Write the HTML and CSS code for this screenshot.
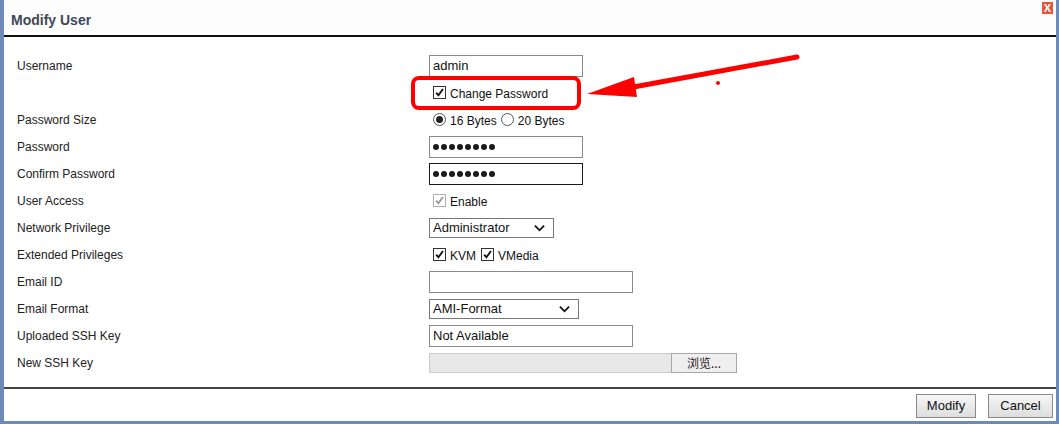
FILE: index.html
```html
<!DOCTYPE html>
<html>
<head>
<meta charset="utf-8">
<link rel="stylesheet" href="styles.css">
</head>
<body>
<div class="dialog">
  <div class="titlebar">
    <span class="title">Modify User</span>
    <span class="close">X</span>
  </div>
  <div class="form">
    <div class="label">Username</div>
    <div class="ctrl"><div class="input w154">admin</div></div>

    <div class="label"></div>
    <div class="ctrl"><span class="cb checked"><svg viewBox="0 0 12 12"><path d="M2.3 6.2 L4.8 9 L9.8 2.2"/></svg></span><span class="cbtext">Change Password</span></div>

    <div class="label">Password Size</div>
    <div class="ctrl"><span class="radio on"></span><span class="rtext">16 Bytes</span><span class="radio"></span><span class="rtext">20 Bytes</span></div>

    <div class="label">Password</div>
    <div class="ctrl"><div class="input w154 dots"><i></i><i></i><i></i><i></i><i></i><i></i><i></i><i></i></div></div>

    <div class="label">Confirm Password</div>
    <div class="ctrl"><div class="input w154 dots focus"><i></i><i></i><i></i><i></i><i></i><i></i><i></i><i></i></div></div>

    <div class="label">User Access</div>
    <div class="ctrl"><span class="cb checked disabled"><svg viewBox="0 0 12 12"><path d="M2.3 6.2 L4.8 9 L9.8 2.2"/></svg></span><span class="cbtext">Enable</span></div>

    <div class="label">Network Privilege</div>
    <div class="ctrl"><div class="select w125"><span>Administrator</span><svg viewBox="0 0 12 8"><path d="M1 1.5 L6 6.5 L11 1.5"/></svg></div></div>

    <div class="label">Extended Privileges</div>
    <div class="ctrl"><span class="cb checked"><svg viewBox="0 0 12 12"><path d="M2.3 6.2 L4.8 9 L9.8 2.2"/></svg></span><span class="cbtext kvm">KVM</span><span class="cb checked"><svg viewBox="0 0 12 12"><path d="M2.3 6.2 L4.8 9 L9.8 2.2"/></svg></span><span class="cbtext">VMedia</span></div>

    <div class="label">Email ID</div>
    <div class="ctrl"><div class="input w204"></div></div>

    <div class="label">Email Format</div>
    <div class="ctrl"><div class="select w150"><span>AMI-Format</span><svg viewBox="0 0 12 8"><path d="M1 1.5 L6 6.5 L11 1.5"/></svg></div></div>

    <div class="label">Uploaded SSH Key</div>
    <div class="ctrl"><div class="input w204">Not Available</div></div>

    <div class="label">New SSH Key</div>
    <div class="ctrl"><div class="file"><span class="filebar"></span><span class="filebtn">浏览...</span></div></div>
  </div>
  <div class="footer">
    <button class="btn modify">Modify</button>
    <button class="btn cancel">Cancel</button>
  </div>
</div>
<svg class="annot" width="1059" height="424" viewBox="0 0 1059 424">
  <rect x="413" y="78" width="166" height="30" rx="6" ry="6" fill="none" stroke="#ff0000" stroke-width="4"/>
  <line x1="628" y1="88" x2="797" y2="57" stroke="#ff0000" stroke-width="5" stroke-linecap="round"/>
  <polygon points="587,94 634,77 637,97" fill="#ff0000"/>
  <circle cx="718" cy="83" r="2" fill="#ff0000"/>
</svg>
</body>
</html>
```
FILE: styles.css
```css
html, body {
  margin: 0;
  padding: 0;
  background: #ffffff;
}
body {
  font-family: "Liberation Sans", Arial, sans-serif;
  width: 1059px;
  height: 424px;
  overflow: hidden;
  position: relative;
}
.dialog {
  box-sizing: border-box;
  width: 1059px;
  height: 424px;
  border-left: 4px solid #6f8ab7;
  border-right: 3px solid #6f8ab7;
  border-bottom: 3px solid #6f8ab7;
  background: #ffffff;
  display: flex;
  flex-direction: column;
}
.titlebar {
  height: 35px;
  flex: none;
  border-bottom: 2px solid #111111;
  background: #fdfdfd;
  display: flex;
  align-items: center;
  justify-content: space-between;
  position: relative;
}
.title {
  font-size: 14px;
  font-weight: bold;
  color: #404858;
  padding-left: 7px;
  margin-top: 5px;
}
.close {
  position: absolute;
  right: 3px;
  top: 2px;
  width: 11px;
  height: 12px;
  background: #e8563a;
  color: #ffffff;
  font-size: 11px;
  font-weight: bold;
  line-height: 12px;
  text-align: center;
}
.form {
  flex: none;
  padding-top: 15px;
  display: grid;
  grid-template-columns: 425px 1fr;
  grid-auto-rows: 27px;
}
.label {
  font-size: 12px;
  color: #222222;
  padding-left: 13px;
  display: flex;
  align-items: center;
}
.ctrl {
  display: flex;
  align-items: center;
  font-size: 12px;
  color: #111111;
}
.input {
  box-sizing: border-box;
  height: 22px;
  border: 1px solid #8a8a8a;
  background: #ffffff;
  font-size: 13px;
  color: #111;
  padding-left: 3px;
  display: flex;
  align-items: center;
}
.input.focus {
  border-color: #1a1a1a;
}
.w154 { width: 154px; }
.w204 { width: 204px; }
.w125 { width: 125px; }
.w150 { width: 150px; }
.dots {
  gap: 2px;
  padding-left: 3px;
}
.dots i {
  display: block;
  width: 6px;
  height: 6px;
  border-radius: 50%;
  background: #1a1a1a;
}
.cb {
  box-sizing: border-box;
  width: 13px;
  height: 13px;
  border: 1px solid #333333;
  background: #ffffff;
  margin-left: 4px;
  display: inline-flex;
}
.cb svg {
  width: 11px;
  height: 11px;
  fill: none;
  stroke: #111111;
  stroke-width: 2;
}
.cb.disabled {
  border-color: #b0b0b0;
}
.cb.disabled svg {
  stroke: #9a9a9a;
}
.cbtext {
  margin-left: 4px;
  font-size: 12px;
  margin-top: 2px;
}
.cbtext.kvm {
  margin-right: 1px;
}
.radio {
  box-sizing: border-box;
  width: 13px;
  height: 13px;
  border: 1px solid #555555;
  border-radius: 50%;
  background: #ffffff;
  margin-left: 4px;
  position: relative;
}
.radio.on::after {
  content: "";
  position: absolute;
  left: 2px;
  top: 2px;
  width: 7px;
  height: 7px;
  border-radius: 50%;
  background: #222222;
}
.rtext {
  margin-left: 4px;
  font-size: 12px;
  margin-top: 2px;
}
.select {
  box-sizing: border-box;
  height: 20px;
  border: 1px solid #777777;
  background: #ffffff;
  font-size: 13px;
  padding-left: 3px;
  padding-right: 8px;
  display: flex;
  align-items: center;
  justify-content: space-between;
}
.select svg {
  width: 11px;
  height: 8px;
  fill: none;
  stroke: #111111;
  stroke-width: 2;
}
.file {
  display: flex;
  height: 20px;
}
.filebar {
  box-sizing: border-box;
  width: 242px;
  height: 20px;
  background: #e8e8e8;
  border: 1px solid #cccccc;
  border-right: none;
}
.filebtn {
  box-sizing: border-box;
  width: 66px;
  height: 20px;
  background: #efefef;
  border: 1px solid #a8a8a8;
  font-family: "Noto Sans CJK SC", sans-serif;
  font-size: 12px;
  color: #222;
  display: flex;
  align-items: center;
  justify-content: center;
}
.footer {
  margin-top: 11px;
  border-top: 2px solid #444444;
  flex: 1;
  display: flex;
  justify-content: flex-end;
  align-items: center;
  gap: 12px;
  padding-right: 3px;
  padding-top: 1px;
}
.btn {
  box-sizing: border-box;
  height: 24px;
  font-family: "Liberation Sans", Arial, sans-serif;
  font-size: 13px;
  color: #111111;
  border: 1px solid #8a8a8a;
  background: linear-gradient(#f6f6f6, #dedede);
  padding: 0;
}
.modify { width: 60px; }
.cancel { width: 65px; }
.annot {
  position: absolute;
  left: 0;
  top: 0;
  pointer-events: none;
}
```
